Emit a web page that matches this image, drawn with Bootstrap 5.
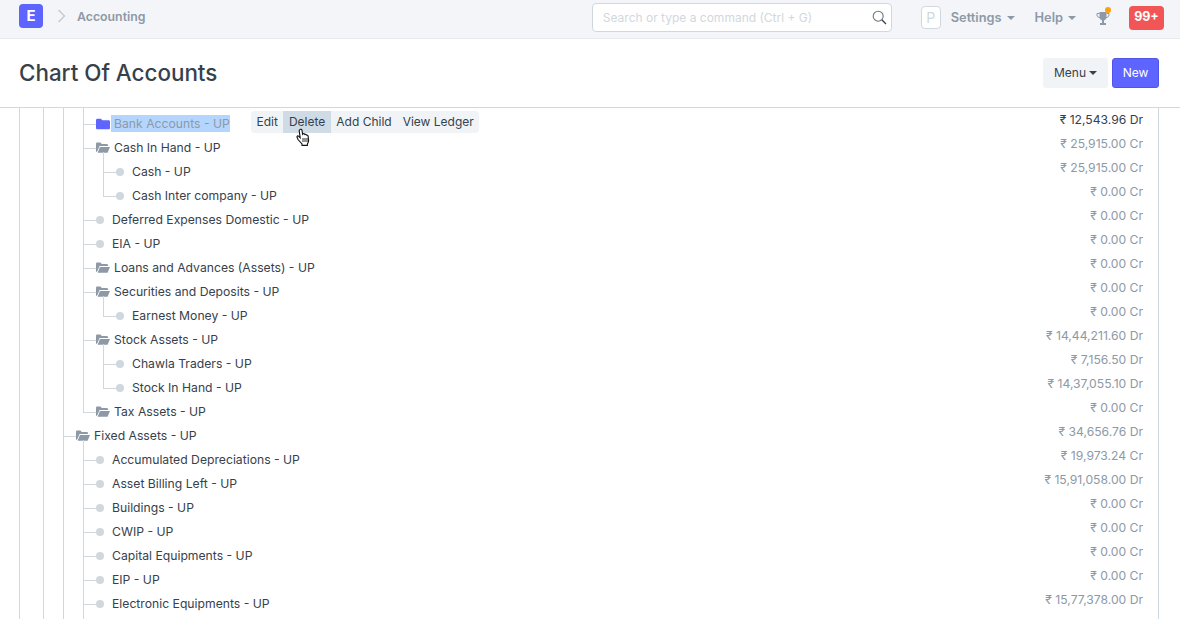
<!DOCTYPE html>
<html lang="en">
<head>
<meta charset="utf-8">
<title>Chart Of Accounts</title>
<link href="https://cdn.jsdelivr.net/npm/bootstrap@5.3.0/dist/css/bootstrap.min.css" rel="stylesheet">
<style>
html,body{height:100%;overflow:hidden}
body{font-family:Inter,"Liberation Sans",sans-serif;font-size:12.2px;color:#36414c;background:#fff}
.topbar{height:39px;background:#f4f5f8;border-bottom:1px solid #e6eaef;padding:0 16px 3px 19px}
.logo-e{width:24px;height:24px;border-radius:4px;background:#5e64ff;color:#fff;font-weight:700;font-size:15px;margin-bottom:3px}
.chev-s{margin:0 10px 3px 14px}
.crumb{font-weight:600;color:#8d99a6;font-size:12.3px}
.search-box{width:300px;height:29px;background:#fff;border:1px solid #d1d8dd;border-radius:4px;padding:0 4px 0 10px;margin-right:29px;color:#d1d8dd;font-size:12px}
.p-box{width:20px;height:23px;border:1px solid #d1d8dd;border-radius:4px;color:#d1d8dd;font-size:14px;margin-right:10px;background:#fff}
.nav-txt{font-weight:600;color:#8d99a6;font-size:12.8px}
.nav-gap{margin-right:20px}
.caret-s{display:inline-block;border-left:4px solid transparent;border-right:4px solid transparent;border-top:4px solid currentColor;margin-left:5px;vertical-align:2px}
.trophy-wrap{position:relative;width:14px;height:16px;margin-left:20px;margin-right:19px}
.trophy-dot{position:absolute;right:-1px;top:-3px;width:6px;height:6px;border-radius:50%;background:#ffa00a}
.count-pill{width:35px;height:24px;background:#f25555;border-radius:4px;color:#fff;font-weight:700;font-size:12.5px}
.page-head{height:69px;border-bottom:1px solid #d1d8dd;padding:0 21px 0 19px}
.page-title{font-size:22.4px;font-weight:500;color:#36414c;margin:0}
.btn-menu,.btn-new{height:30px;font-size:12px;padding:0 11px;border-radius:3px;display:flex;align-items:center}
.btn-menu{background:#f0f4f7;color:#36414c;border:0;width:65px;justify-content:center}
.btn-menu .caret-s{margin-left:3px}
.btn-new{background:#5e64ff;color:#fff;border:1px solid #4f55e6;width:47px;justify-content:center}
.tree-pane{position:relative;margin:0 21px 0 19px;height:512px;overflow:hidden;border-left:1px solid #d1d8dd;border-right:1px solid #d1d8dd;padding-top:4px}
.tb{list-style:none;margin:0;padding:0;position:relative}
.tb.lv1{margin-left:23px}
.tb.lv2{margin-left:20px}
.tb.lv3{margin-left:20px}
.tb.lv4{margin-left:20px}
.tb::before{content:"";position:absolute;left:0;top:-12px;bottom:0;border-left:1px solid #d1d8dd}
.tb.ends::before{bottom:12px}
.tb.opens::before{top:-8px}
.rw{height:24px;position:relative;display:flex}
.rw::before{content:"";position:absolute;left:0;top:12px;width:13px;border-top:1px solid #d1d8dd}
.dot-i{width:8px;height:8px;border-radius:50%;background:#d1d8dd;position:absolute;left:13px;top:8px}
.fold-i{position:absolute;left:13px;top:5px;width:14px;height:14px}
.lbl{line-height:24px;white-space:nowrap;color:#36414c}
.lbl.leaf{margin-left:29px}
.lbl.grp{margin-left:31px}
.lbl.sel{background:#b4d5fe;color:#8d99a6;padding:0 0 0 3px;margin-left:28px;height:17px;line-height:17px;margin-top:3px}
.amt{position:absolute;right:15px;line-height:16px;color:#8d99a6;font-size:12.15px;white-space:nowrap}
.amt.dk{color:#36414c}
.act-group{position:absolute;left:168px;top:-1px;height:22px;background:#f0f4f7;border-radius:4px;z-index:2;font-size:12px}
.act-group span{padding:0 5.5px;line-height:22px;display:block}
.act-group .hov{background:#cfdce6}
.cursor-h{position:absolute;left:296px;top:128px;width:15px;height:19px;z-index:5}
</style>
</head>
<body>
<nav class="topbar d-flex align-items-center">
  <div class="logo-e d-flex align-items-center justify-content-center">E</div>
  <svg class="chev-s" width="10" height="14" viewBox="0 0 10 14" aria-hidden="true"><path d="M1.500 1l6 6-6 6" fill="none" stroke="#c0c6cc" stroke-width="1.2"/></svg>
  <span class="crumb">Accounting</span>
  <div class="ms-auto search-box d-flex align-items-center justify-content-between">
    <span>Search or type a command (Ctrl + G)</span>
    <svg width="15" height="15" viewBox="0 0 15 15" aria-hidden="true"><circle cx="6.200" cy="6.200" r="5" fill="none" stroke="#6c7680" stroke-width="1.100"/><path d="M9.800 9.800l4.200 4.200" stroke="#36414c" stroke-width="1.300"/></svg>
  </div>
  <div class="p-box d-flex align-items-center justify-content-center">P</div>
  <span class="nav-txt nav-gap">Settings<i class="caret-s"></i></span>
  <span class="nav-txt">Help<i class="caret-s"></i></span>
  <div class="trophy-wrap">
    <svg width="14" height="16" viewBox="0 0 14 16" aria-hidden="true"><path d="M3.500 1h7v5.200c0 2-1.500 3.200-3.500 3.200S3.500 8.200 3.500 6.200z" fill="#8d99a6"/><path d="M3.500 2.500H1v1.500c0 1.500 1.200 2.500 3 2.500M10.500 2.500H13v1.500c0 1.500-1.200 2.500-3 2.500" fill="none" stroke="#8d99a6"/><path d="M6 9h2v3H6zM4 12h6v2H4z" fill="#8d99a6"/></svg>
    <span class="trophy-dot"></span>
  </div>
  <div class="count-pill d-flex align-items-center justify-content-center">99+</div>
</nav>
<header class="page-head d-flex align-items-center justify-content-between">
  <h1 class="page-title">Chart Of Accounts</h1>
  <div class="d-flex gap-1">
    <button class="btn btn-menu" type="button">Menu<i class="caret-s"></i></button>
    <button class="btn btn-new" type="button">New</button>
  </div>
</header>
<main class="tree-pane">
<svg width="0" height="0" style="position:absolute" aria-hidden="true"><defs>
<symbol id="open" viewBox="0 0 15 14"><path d="M0 2.500C0 1.700.6 1.200 1.300 1.200h3.400l1.500 1.500h5.300c.8 0 1.300.5 1.300 1.200v1H3.800L1.200 11H0z" fill="#8d99a6"/><path d="M4.200 6H15l-2.600 6H1.800z" fill="#8d99a6"/></symbol>
<symbol id="closed" viewBox="0 0 15 14"><path d="M0 3c0-.9.600-1.600 1.500-1.600h3.800l1.500 1.600h6.700c.9 0 1.500.6 1.500 1.500v6.700c0 .9-.6 1.500-1.500 1.500H1.500C.6 12.700 0 12.100 0 11.200z" fill="#5e64ff"/></symbol>
</defs></svg>
<ul class="tb lv1"><li><ul class="tb lv2"><li><ul class="tb lv3 ends">
  <li class="rw"><svg class="fold-i" aria-hidden="true"><use href="#closed"/></svg><span class="lbl sel">Bank Accounts - UP</span><span class="amt dk">₹ 12,543.96 Dr</span>
    <div class="act-group d-flex"><span>Edit</span><span class="hov">Delete</span><span>Add Child</span><span>View Ledger</span></div></li>
  <li><div class="rw"><svg class="fold-i" aria-hidden="true"><use href="#open"/></svg><span class="lbl grp">Cash In Hand - UP</span><span class="amt">₹ 25,915.00 Cr</span></div>
    <ul class="tb lv4 ends opens">
      <li class="rw"><i class="dot-i"></i><span class="lbl leaf">Cash - UP</span><span class="amt">₹ 25,915.00 Cr</span></li>
      <li class="rw"><i class="dot-i"></i><span class="lbl leaf">Cash Inter company - UP</span><span class="amt">₹ 0.00 Cr</span></li>
    </ul></li>
  <li class="rw"><i class="dot-i"></i><span class="lbl leaf">Deferred Expenses Domestic - UP</span><span class="amt">₹ 0.00 Cr</span></li>
  <li class="rw"><i class="dot-i"></i><span class="lbl leaf">EIA - UP</span><span class="amt">₹ 0.00 Cr</span></li>
  <li class="rw"><svg class="fold-i" aria-hidden="true"><use href="#open"/></svg><span class="lbl grp">Loans and Advances (Assets) - UP</span><span class="amt">₹ 0.00 Cr</span></li>
  <li><div class="rw"><svg class="fold-i" aria-hidden="true"><use href="#open"/></svg><span class="lbl grp">Securities and Deposits - UP</span><span class="amt">₹ 0.00 Cr</span></div>
    <ul class="tb lv4 ends opens">
      <li class="rw"><i class="dot-i"></i><span class="lbl leaf">Earnest Money - UP</span><span class="amt">₹ 0.00 Cr</span></li>
    </ul></li>
  <li><div class="rw"><svg class="fold-i" aria-hidden="true"><use href="#open"/></svg><span class="lbl grp">Stock Assets - UP</span><span class="amt">₹ 14,44,211.60 Dr</span></div>
    <ul class="tb lv4 ends opens">
      <li class="rw"><i class="dot-i"></i><span class="lbl leaf">Chawla Traders - UP</span><span class="amt">₹ 7,156.50 Dr</span></li>
      <li class="rw"><i class="dot-i"></i><span class="lbl leaf">Stock In Hand - UP</span><span class="amt">₹ 14,37,055.10 Dr</span></li>
    </ul></li>
  <li class="rw"><svg class="fold-i" aria-hidden="true"><use href="#open"/></svg><span class="lbl grp">Tax Assets - UP</span><span class="amt">₹ 0.00 Cr</span></li>
</ul></li>
<li><div class="rw"><svg class="fold-i" aria-hidden="true"><use href="#open"/></svg><span class="lbl grp">Fixed Assets - UP</span><span class="amt">₹ 34,656.76 Dr</span></div>
<ul class="tb lv3 opens">
  <li class="rw"><i class="dot-i"></i><span class="lbl leaf">Accumulated Depreciations - UP</span><span class="amt">₹ 19,973.24 Cr</span></li>
  <li class="rw"><i class="dot-i"></i><span class="lbl leaf">Asset Billing Left - UP</span><span class="amt">₹ 15,91,058.00 Dr</span></li>
  <li class="rw"><i class="dot-i"></i><span class="lbl leaf">Buildings - UP</span><span class="amt">₹ 0.00 Cr</span></li>
  <li class="rw"><i class="dot-i"></i><span class="lbl leaf">CWIP - UP</span><span class="amt">₹ 0.00 Cr</span></li>
  <li class="rw"><i class="dot-i"></i><span class="lbl leaf">Capital Equipments - UP</span><span class="amt">₹ 0.00 Cr</span></li>
  <li class="rw"><i class="dot-i"></i><span class="lbl leaf">EIP - UP</span><span class="amt">₹ 0.00 Cr</span></li>
  <li class="rw"><i class="dot-i"></i><span class="lbl leaf">Electronic Equipments - UP</span><span class="amt">₹ 15,77,378.00 Dr</span></li>
  <li class="rw"></li>
</ul></li></ul></li></ul>
</main>
<svg class="cursor-h" viewBox="0 0 15 19" aria-hidden="true"><path d="M4 1.500c.8-.6 1.800-.2 2 .8l.6 4 .6-.6c.7-.3 1.400 0 1.600.7.700-.3 1.400 0 1.600.7.800-.3 1.600.1 1.700 1l.5 4.300c.1 1.400-.4 2.500-1.200 3.500v1.500H6v-1.500L2 11.500 1 9c-.2-.9.800-1.500 1.500-.9l1.700 1.700L3.200 3c-.1-.6.300-1.200.8-1.500z" fill="#fff" stroke="#111" stroke-width="1.100"/><path d="M7 10v4M9 10v4M11 10v4" stroke="#111" stroke-width=".9"/></svg>
<script src="https://cdn.jsdelivr.net/npm/bootstrap@5.3.0/dist/js/bootstrap.bundle.min.js"></script>
</body>
</html>
